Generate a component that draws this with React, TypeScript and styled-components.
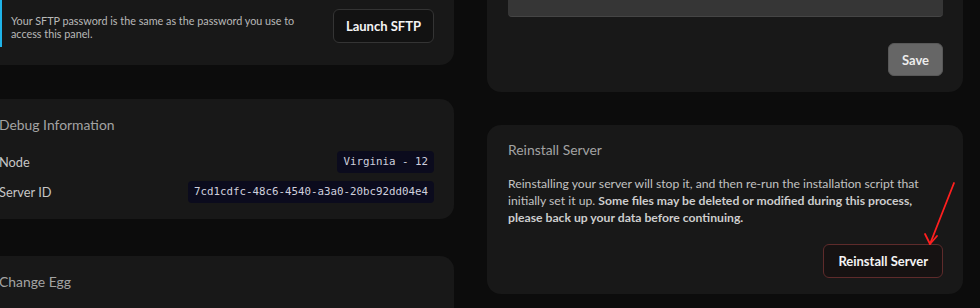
import styled, { createGlobalStyle } from "styled-components";

const GlobalStyle = createGlobalStyle`
    html, body {
        margin: 0;
        padding: 0;
        background: #0c0c0c;
        overflow: hidden;
    }
    body {
        font-family: "Lato", "Noto Sans", sans-serif;
        color: #c4c4c4;
    }
`;

const Page = styled.div`
    position: relative;
    width: 980px;
    height: 308px;
    overflow: hidden;
`;

const Columns = styled.div`
    display: grid;
    grid-template-columns: 476px 476px;
    column-gap: 33px;
    margin-left: -22px;
    margin-top: -26px;
    align-items: start;
`;

const Column = styled.div<{ $gap: number }>`
    display: flex;
    flex-direction: column;
    gap: ${props => props.$gap}px;
`;

const Card = styled.div<{ $pt?: number; $pb?: number; $mt?: number }>`
    background: #181818;
    border-radius: 14px;
    padding: ${props => props.$pt ?? 20}px 20px ${props => props.$pb ?? 16}px 21px;
    margin-top: ${props => props.$mt ?? 0}px;
`;

const CardTitle = styled.h3<{ $mb?: number }>`
    margin: 0 0 ${props => props.$mb ?? 16}px;
    font-size: 13.9px;
    font-weight: 400;
    line-height: 18px;
    color: #a3a3a3;
`;

const SftpRow = styled.div`
    display: flex;
    align-items: flex-end;
    justify-content: space-between;
    gap: 20px;
`;

const InfoBox = styled.div`
    border-left: 3px solid #1fb3e8;
    padding: 20px 0 7px 9px;
    font-size: 10.8px;
    line-height: 13px;
    color: #b8b8b8;
    max-width: 288px;
`;

const OutlineButton = styled.button<{ $border?: string; $bg?: string }>`
    font-family: inherit;
    font-size: 13px;
    font-weight: 700;
    color: #f4f4f4;
    background: ${props => props.$bg ?? "#121212"};
    border: 1px solid ${props => props.$border ?? "#343434"};
    border-radius: 6px;
    padding: 0 14px;
    height: 34px;
    cursor: pointer;
    white-space: nowrap;
`;

const LaunchButton = styled(OutlineButton)`
    margin-bottom: 4px;
    padding: 0 12px;
`;

const InfoRow = styled.div`
    display: flex;
    align-items: center;
    justify-content: space-between;
    font-size: 12.8px;
    color: #c6c6c6;
    & + & {
        margin-top: 8px;
    }
`;

const Chip = styled.code`
    font-family: "DejaVu Sans Mono", "Liberation Mono", monospace;
    font-size: 10.8px;
    line-height: 22px;
    background: #0b0b1d;
    color: #cfd0de;
    padding: 0 6px;
    border-radius: 4px;
`;

const TextArea = styled.div`
    height: 22px;
    background: #363636;
    border-radius: 0 0 4px 4px;
    border-bottom: 1px solid #454545;
`;

const Actions = styled.div<{ $mt: number }>`
    display: flex;
    justify-content: flex-end;
    margin-top: ${props => props.$mt}px;
`;

const SaveButton = styled.button`
    font-family: inherit;
    font-size: 13px;
    font-weight: 700;
    color: #ececec;
    background: #666666;
    border: 1px solid #585858;
    border-radius: 6px;
    height: 33px;
    padding: 0 13px;
`;

const Paragraph = styled.p`
    margin: 0;
    font-size: 12.2px;
    line-height: 17px;
    color: #c2c2c2;
    strong {
        font-weight: 700;
        color: #cdcdcd;
    }
`;

const EggBody = styled.div`
    height: 60px;
`;

const ArrowOverlay = styled.svg`
    position: absolute;
    left: 920px;
    top: 178px;
    pointer-events: none;
`;

export default function App() {
    return (
        <Page>
            <GlobalStyle />
            <Columns>
                <Column $gap={34}>
                    <Card $pb={18}>
                        <SftpRow>
                            <InfoBox>
                                Your SFTP password is the same as the password you use to access this panel.
                            </InfoBox>
                            <LaunchButton>Launch SFTP</LaunchButton>
                        </SftpRow>
                    </Card>
                    <Card $pt={17}>
                        <CardTitle $mb={17}>Debug Information</CardTitle>
                        <InfoRow>
                            <span>Node</span>
                            <Chip>Virginia - 12</Chip>
                        </InfoRow>
                        <InfoRow>
                            <span>Server ID</span>
                            <Chip>7cd1cdfc-48c6-4540-a3a0-20bc92dd04e4</Chip>
                        </InfoRow>
                    </Card>
                    <Card $pt={17} $mt={3}>
                        <CardTitle>Change Egg</CardTitle>
                        <EggBody />
                    </Card>
                </Column>
                <Column $gap={33}>
                    <Card>
                        <TextArea />
                        <Actions $mt={26}>
                            <SaveButton>Save</SaveButton>
                        </Actions>
                    </Card>
                    <Card $pt={16}>
                        <CardTitle $mb={16}>Reinstall Server</CardTitle>
                        <Paragraph>
                            Reinstalling your server will stop it, and then re-run the installation script that
                            initially set it up.{" "}
                            <strong>
                                Some files may be deleted or modified during this process, please back up your data
                                before continuing.
                            </strong>
                        </Paragraph>
                        <Actions $mt={18}>
                            <OutlineButton $border="#5e2b2b" $bg="#161212">Reinstall Server</OutlineButton>
                        </Actions>
                    </Card>
                </Column>
            </Columns>
            <ArrowOverlay width="44" height="72" viewBox="0 0 44 72">
                <line x1="34" y1="5" x2="10" y2="66" stroke="#ff1f1f" strokeWidth="1.8" strokeLinecap="round" />
                <polyline
                    points="5,56 10,66 17,58"
                    fill="none"
                    stroke="#ff1f1f"
                    strokeWidth="1.8"
                    strokeLinecap="round"
                    strokeLinejoin="round"
                />
            </ArrowOverlay>
        </Page>
    );
}
